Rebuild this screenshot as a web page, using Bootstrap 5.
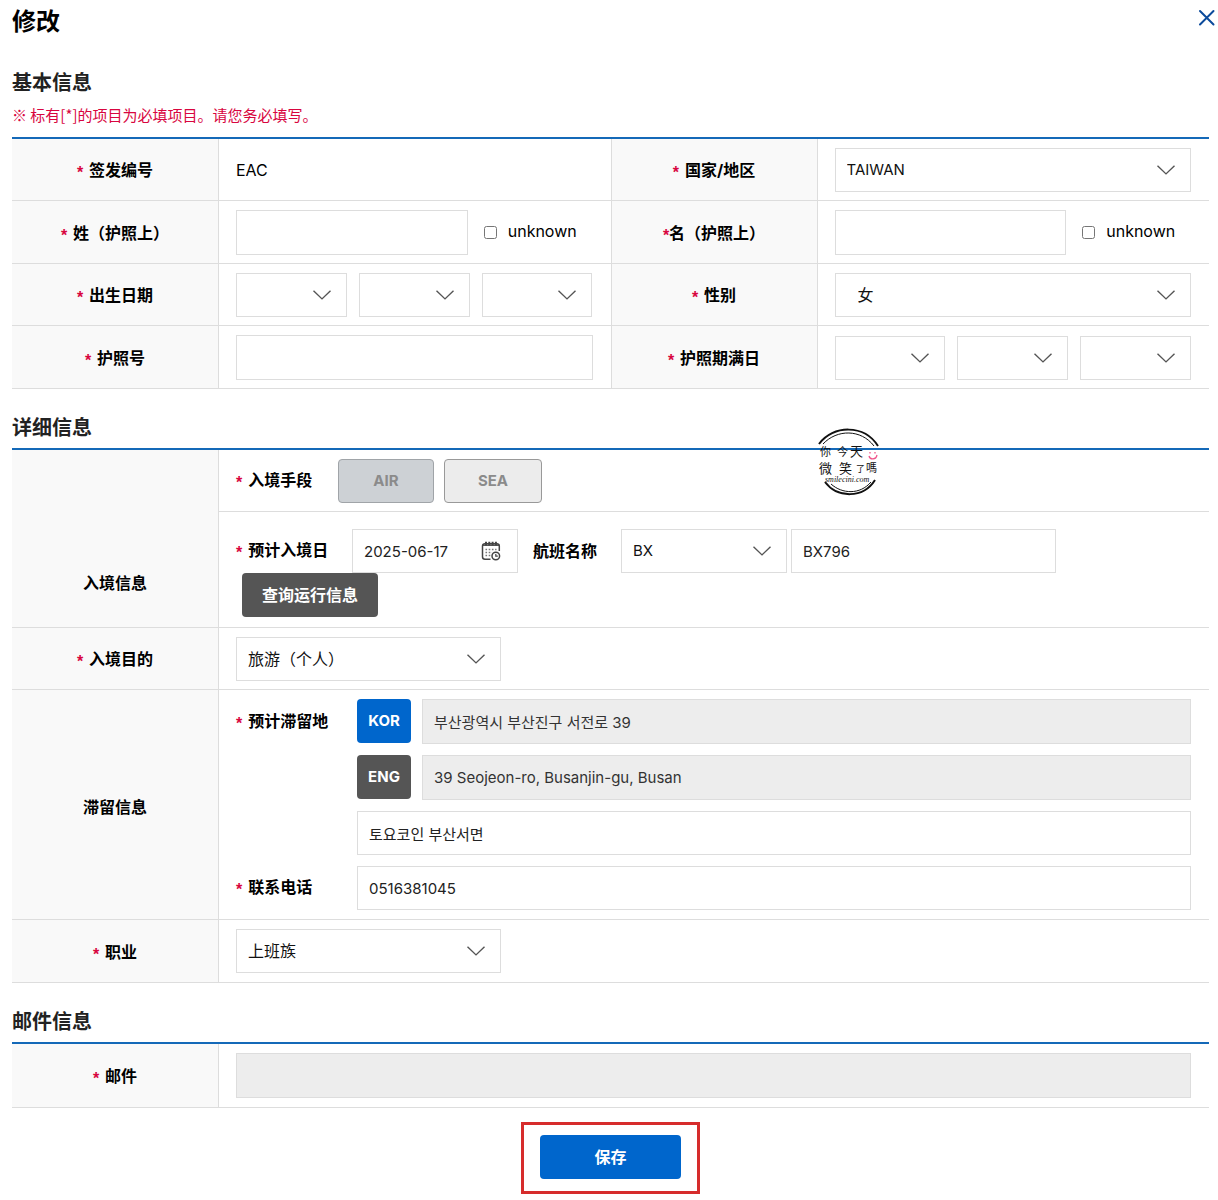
<!DOCTYPE html>
<html lang="zh-CN">
<head>
<meta charset="utf-8">
<meta name="viewport" content="width=device-width, initial-scale=1">
<title>修改</title>
<link href="https://cdn.jsdelivr.net/npm/bootstrap@5.3.0/dist/css/bootstrap.min.css" rel="stylesheet">
<style>
body{font-family:Inter,"Noto Sans CJK SC","Noto Sans CJK KR",sans-serif;font-size:16px;line-height:24px;color:#000;background:#fff}
.page-wrap{padding:5px 9px 7px 12px}
.page-title{font-size:24px;line-height:34px;font-weight:700;margin:0}
.close-btn{width:24px;height:24px;margin:0 -9px 0 0;color:#0b4a9b;line-height:0}
.sec-title{font-size:20px;line-height:28px;font-weight:700;color:#222;margin:0 0 6px}
.note{font-family:"Noto Sans CJK SC",sans-serif;font-size:15px;line-height:24px;color:#d8063f;margin:6px 0 10px}
.form-table{width:100%;table-layout:fixed;border-top:2px solid #1469b8;border-collapse:separate;border-spacing:0}
.form-table th,.form-table td{border-bottom:1px solid #ddd;padding:9px 18px 8px 17px;vertical-align:middle}
.form-table th{background:#f9f9f9;border-right:1px solid #ddd;text-align:center;padding:12px 8px 8px;font-weight:700}
.form-table td+th{border-left:1px solid #ddd}
.col-label{width:207px}
.form-table th.lead-cell{vertical-align:bottom;padding-bottom:32px}
.form-table td.flight-cell{padding-top:17px;padding-bottom:10px}
.form-table td.roomy{padding-bottom:9px}
.req{color:#d8063f;font-family:"Liberation Sans",sans-serif;font-weight:700;vertical-align:-2px;margin-right:6px}
.req-tight{margin-right:0}
.ctl{display:block;width:100%;min-width:0;height:44px;border:1px solid #ddd;border-radius:0;background-color:#fff;color:#222;font-size:15px;line-height:22px;padding:0 11px}
.ctl-in{height:45px}
.ctl:disabled,.ctl[readonly]{background-color:#ededed;color:#333;opacity:1}
select.ctl{appearance:none;color:#111;padding-right:36px;background-image:url("data:image/svg+xml,%3Csvg xmlns='http://www.w3.org/2000/svg' width='18' height='10' viewBox='0 0 18 10' fill='none' stroke='%23555' stroke-width='1.4'%3E%3Cpath d='M.5.7 9 8.9 17.5.7'/%3E%3C/svg%3E");background-repeat:no-repeat;background-position:right 15px center}
select.ctl-cjk{font-size:16px}
select.ctl-indent{padding-left:22px}
.name-in{flex:0 0 65%;width:65%}
.chk{width:13px;height:13px;margin:0 11px 0 16px}
.chk+label{padding-bottom:4px}
.gap-12{gap:12px}.gap-11{gap:11px}.gap-10{gap:10px}
.w-code{width:166px}.w-flight{width:265px}.w-mid{width:265px}
.lab-way{width:92px}.lab-date{width:116px}.lab-flight{width:88px;margin-left:15px}.lab-stay{width:121px;flex:none}
.lab-top{padding-top:10px}
.fbtn{height:44px;border-radius:4px;padding:0 20px;font-weight:700;font-size:16px;line-height:22px;border:0;color:#fff;background:#555}
.fbtn-query{margin-left:6px}
.fbtn-sm{width:54px;padding:0;font-size:15px}
.fbtn-blue{background:#06c}
.fbtn:disabled{border:1px solid #999;background:#ececec;color:#8b8b8b;opacity:1;width:98px;font-size:15px}
.fbtn:disabled.picked{background:#cdd1d5;border-color:#a0a4a8;width:96px}
.date-box{border:1px solid #ddd;height:44px}
.date-box input{border:0;width:118px;height:42px;padding:0 11px;font-size:15px;color:#222;background:none}
.date-box button{line-height:0;margin-left:10px}
.hl-box{border:3px solid #d62c2c;padding:10px 16px 12px}
.save-area{margin-top:14px}
.save-btn{width:141px}
.stamp{left:805px;top:14px;width:64px;height:68px}
.first-sec{margin-top:30px}
.next-sec{margin-top:25px}
</style>
<script src="https://cdn.jsdelivr.net/npm/bootstrap@5.3.0/dist/js/bootstrap.bundle.min.js"></script>
</head>
<body>
<main class="page-wrap">
<header class="d-flex justify-content-between align-items-start">
<h1 class="page-title">修改</h1>
<button type="button" class="close-btn btn p-0 border-0" aria-label="关闭"><svg width="24" height="24" viewBox="0 0 24 24" fill="none" stroke="currentColor" stroke-width="2" stroke-linecap="round"><path d="M6 6 19.500 19.500M19.500 6 6 19.500"/></svg></button>
</header>
<form>
<section class="first-sec">
<h2 class="sec-title">基本信息</h2>
<p class="note">※ 标有[*]的项目为必填项目。请您务必填写。</p>
<table class="form-table">
<colgroup><col class="col-label"><col><col class="col-label"><col></colgroup>
<tbody>
<tr>
<th scope="row"><span class="req">*</span>签发编号</th><td>EAC</td>
<th scope="row"><label for="nation"><span class="req">*</span>国家/地区</label></th>
<td><select id="nation" class="ctl"><option>TAIWAN</option></select></td>
</tr>
<tr>
<th scope="row"><label for="surname"><span class="req">*</span>姓（护照上）</label></th>
<td><div class="d-flex align-items-center"><input id="surname" type="text" class="ctl ctl-in name-in"><input id="unk1" type="checkbox" class="chk"><label for="unk1">unknown</label></div></td>
<th scope="row"><label for="given"><span class="req req-tight">*</span>名（护照上）</label></th>
<td><div class="d-flex align-items-center"><input id="given" type="text" class="ctl ctl-in name-in"><input id="unk2" type="checkbox" class="chk"><label for="unk2">unknown</label></div></td>
</tr>
<tr>
<th scope="row"><label for="by"><span class="req">*</span>出生日期</label></th>
<td><div class="d-flex gap-12"><select id="by" class="ctl" aria-label="年"><option></option></select><select class="ctl" aria-label="月"><option></option></select><select class="ctl" aria-label="日"><option></option></select></div></td>
<th scope="row"><label for="sex"><span class="req">*</span>性别</label></th>
<td><select id="sex" class="ctl ctl-cjk ctl-indent"><option>女</option></select></td>
</tr>
<tr>
<th scope="row"><label for="passno"><span class="req">*</span>护照号</label></th>
<td><input id="passno" type="text" class="ctl ctl-in"></td>
<th scope="row"><label for="ey"><span class="req">*</span>护照期满日</label></th>
<td><div class="d-flex gap-12"><select id="ey" class="ctl" aria-label="年"><option></option></select><select class="ctl" aria-label="月"><option></option></select><select class="ctl" aria-label="日"><option></option></select></div></td>
</tr>
</tbody>
</table>
</section>

<section class="next-sec position-relative">
<h2 class="sec-title">详细信息</h2>
<table class="form-table">
<colgroup><col class="col-label"><col></colgroup>
<tbody>
<tr>
<th scope="rowgroup" rowspan="2" class="lead-cell">入境信息</th>
<td><div class="d-flex align-items-center gap-10"><b class="lab-way"><span class="req">*</span>入境手段</b><button type="button" class="fbtn picked" disabled>AIR</button><button type="button" class="fbtn" disabled>SEA</button></div></td>
</tr>
<tr>
<td class="flight-cell"><div class="d-flex flex-wrap align-items-center">
<label for="arr" class="lab-date fw-bold"><span class="req">*</span>预计入境日</label>
<div class="date-box w-code d-flex align-items-center"><input id="arr" type="text" value="2025-06-17"><button type="button" class="btn p-0 border-0" aria-label="选择日期"><svg width="20" height="20" viewBox="0 0 20 20" fill="none" stroke="#444" stroke-width="1.500"><path d="M9.500 18.200H4A2.500 2.500 0 0 1 1.500 15.700V5A2.300 2.300 0 0 1 3.800 2.700H16A2.300 2.300 0 0 1 18.300 5V10"/><path d="M1.500 4.200h17" stroke-width="1.400"/><path d="M5 .8v3.800M8.300 .8v3.800M11.600 .8v3.800M14.900 .8v3.800" stroke-width="2"/><path d="M4.500 8.500h11M4.500 11.500h6.500M4.500 14.500h5" stroke-width="1.400" stroke-dasharray="1.600 1.600" stroke="#777"/><circle cx="14.800" cy="15" r="3.800"/><path d="M14.800 13v2.200h2" stroke-width="1.200"/></svg></button></div>
<label for="line" class="lab-flight fw-bold">航班名称</label>
<select id="line" class="ctl w-code"><option>BX</option></select>
<input type="text" class="ctl w-flight ms-1" value="BX796" aria-label="航班号">
</div>
<button type="button" class="fbtn fbtn-query d-block">查询运行信息</button></td>
</tr>
<tr>
<th scope="row"><label for="goal"><span class="req">*</span>入境目的</label></th>
<td><select id="goal" class="ctl ctl-cjk w-mid"><option>旅游（个人）</option></select></td>
</tr>
<tr>
<th scope="row">滞留信息</th>
<td class="roomy"><div class="d-flex flex-column gap-11">
<div class="d-flex"><label for="kor" class="lab-stay lab-top fw-bold"><span class="req">*</span>预计滞留地</label>
<div class="flex-grow-1 d-flex flex-column gap-11">
<div class="d-flex gap-11"><button type="button" class="fbtn fbtn-sm fbtn-blue flex-shrink-0">KOR</button><input id="kor" type="text" class="ctl ctl-in" readonly value="부산광역시 부산진구 서전로 39"></div>
<div class="d-flex gap-11"><button type="button" class="fbtn fbtn-sm flex-shrink-0">ENG</button><input type="text" class="ctl ctl-in" readonly value="39 Seojeon-ro, Busanjin-gu, Busan" aria-label="ENG"></div>
<input type="text" class="ctl" value="토요코인 부산서면" aria-label="详细地址">
</div></div>
<div class="d-flex align-items-center"><label for="tel" class="lab-stay fw-bold"><span class="req">*</span>联系电话</label><input id="tel" type="tel" class="ctl" value="0516381045"></div>
</div></td>
</tr>
<tr>
<th scope="row"><label for="job"><span class="req">*</span>职业</label></th>
<td class="roomy"><select id="job" class="ctl ctl-cjk w-mid"><option>上班族</option></select></td>
</tr>
</tbody>
</table>
<svg class="stamp position-absolute" viewBox="0 0 64 68" fill="none" stroke="#111" role="img" aria-label="你今天微笑了嗎">
<path d="M2 16C16-3 47-4 61 18" stroke-width="2"/><path d="M6 16C20 1 44 1 57 18" stroke-width="1"/>
<path d="M8 54C20 70 46 71 58 52" stroke-width="2"/><path d="M14 56C25 66 43 67 54 54" stroke-width="1"/>
<g fill="#111" stroke="none" font-family="'Noto Sans CJK TC',sans-serif"><text x="3" y="28" font-size="11">你</text><text x="20" y="28" font-size="11">今</text><text x="33" y="28" font-size="13">天</text><text x="2" y="45" font-size="13">微</text><text x="22" y="45" font-size="13">笑</text><text x="39" y="44" font-size="9">了</text><text x="49" y="44" font-size="11">嗎</text><text x="8" y="54" font-size="8" font-style="italic" font-family="'Liberation Serif',serif">smilecini.com</text></g>
<g stroke="#f0568c" stroke-width="1.300"><path d="M52 28c1 4 7 4 8-1M53 24v1.500M58 24v1.500"/></g>
</svg>
</section>

<section class="next-sec">
<h2 class="sec-title">邮件信息</h2>
<table class="form-table">
<colgroup><col class="col-label"><col></colgroup>
<tbody><tr><th scope="row"><label for="mail"><span class="req">*</span>邮件</label></th><td class="roomy"><input id="mail" type="email" class="ctl ctl-in" readonly></td></tr></tbody>
</table>
</section>
<div class="save-area d-flex justify-content-center"><div class="hl-box"><button type="submit" class="fbtn fbtn-blue save-btn">保存</button></div></div>
</form>
</main>
</body>
</html>
